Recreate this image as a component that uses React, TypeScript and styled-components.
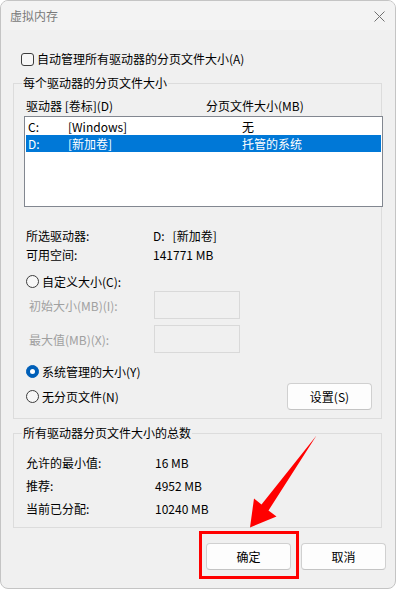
import * as React from 'react'
import styled, { createGlobalStyle } from 'styled-components'

const GlobalStyle = createGlobalStyle`
  html, body {
    margin: 0;
    padding: 0;
    background: #ffffff;
  }
  body {
    font-family: "Noto Sans CJK SC", "Noto Sans", sans-serif;
    font-size: 12px;
    color: #000;
  }
`

const drives = [
  { letter: 'C:', label: '[Windows]', size: '无', selected: false },
  { letter: 'D:', label: '[新加卷]', size: '托管的系统', selected: true },
]

const totals = [
  { label: '允许的最小值:', value: '16 MB' },
  { label: '推荐:', value: '4952 MB' },
  { label: '当前已分配:', value: '10240 MB' },
]

export default () => {
  return (
    <>
      <GlobalStyle />
      <Window>
        <TitleBar>
          <Title>{'虚拟内存'}</Title>
          <CloseButton>
            <svg width="11" height="11" viewBox="0 0 11 11">
              <path d="M0.5 0.5 L10.5 10.5 M10.5 0.5 L0.5 10.5" stroke="#707070" strokeWidth="1" fill="none" />
            </svg>
          </CloseButton>
        </TitleBar>

        <Body>
          <CheckRow>
            <CheckBox />
            <span>{'自动管理所有驱动器的分页文件大小(A)'}</span>
          </CheckRow>

          <Group $top={16} $bottom={8}>
            <Legend>{'每个驱动器的分页文件大小'}</Legend>
            <ListHeader>
              <HeaderCell $w={180}>{'驱动器 [卷标](D)'}</HeaderCell>
              <HeaderCell>{'分页文件大小(MB)'}</HeaderCell>
            </ListHeader>
            <DriveList>
              {drives.map((d) => (
                <DriveRow key={d.letter} $selected={d.selected}>
                  <Cell $w={40}>{d.letter}</Cell>
                  <Cell $w={174}>{d.label}</Cell>
                  <Cell>{d.size}</Cell>
                </DriveRow>
              ))}
            </DriveList>

            <InfoBlock>
              <InfoRow>
                <InfoLabel>{'所选驱动器:'}</InfoLabel>
                <span>{'D:'}</span>
                <DriveName>{'[新加卷]'}</DriveName>
              </InfoRow>
              <InfoRow>
                <InfoLabel>{'可用空间:'}</InfoLabel>
                <span>{'141771 MB'}</span>
              </InfoRow>
            </InfoBlock>

            <RadioRow $top={8}>
              <Radio $checked={false} />
              <span>{'自定义大小(C):'}</span>
            </RadioRow>
            <FieldRow $top={0}>
              <FieldLabel>{'初始大小(MB)(I):'}</FieldLabel>
              <SizeInput />
            </FieldRow>
            <FieldRow $top={6}>
              <FieldLabel>{'最大值(MB)(X):'}</FieldLabel>
              <SizeInput />
            </FieldRow>
            <RadioRow $top={9}>
              <Radio $checked={true} />
              <span>{'系统管理的大小(Y)'}</span>
            </RadioRow>
            <LastRow>
              <RadioLabel>
                <Radio $checked={false} />
                <span>{'无分页文件(N)'}</span>
              </RadioLabel>
              <Button $w={85}>{'设置(S)'}</Button>
            </LastRow>
          </Group>

          <Group $top={14} $bottom={7}>
            <Legend>{'所有驱动器分页文件大小的总数'}</Legend>
            <TotalsBlock>
              {totals.map((t) => (
                <TotalRow key={t.label}>
                  <TotalLabel>{t.label}</TotalLabel>
                  <span>{t.value}</span>
                </TotalRow>
              ))}
            </TotalsBlock>
          </Group>
        </Body>

        <Footer>
          <Highlight>
            <Button $w={85}>{'确定'}</Button>
          </Highlight>
          <Button $w={85}>{'取消'}</Button>
        </Footer>

        <Arrow width="396" height="589" viewBox="0 0 396 589">
          <polygon
            points="316.5,435.5 268.5,510.5 276.5,516.5 250,527.5 254,498.5 261.5,504.5"
            fill="#ff0000"
          />
        </Arrow>
      </Window>
    </>
  )
}

const Window = styled.div`
  position: relative;
  width: 396px;
  height: 589px;
  box-sizing: border-box;
  border: 1px solid #c4c4c4;
  border-radius: 8px;
  background: #f0f0f0;
  overflow: hidden;
  display: flex;
  flex-direction: column;
`

const TitleBar = styled.div`
  height: 29px;
  flex-shrink: 0;
  display: flex;
  align-items: center;
  justify-content: space-between;
  padding: 0 10px 0 9px;
  background: #f3f3f3;
`

const Title = styled.span`
  color: #7a7a7a;
  line-height: 16px;
`

const CloseButton = styled.span`
  display: flex;
  align-items: center;
  justify-content: center;
  width: 11px;
  height: 11px;
  margin-top: 1px;
`

const Body = styled.div`
  display: flex;
  flex-direction: column;
  padding: 0 13px 0 12px;
`

const CheckRow = styled.div`
  display: flex;
  align-items: center;
  gap: 3px;
  margin: 21px 0 0 8px;
  line-height: 16px;
`

const CheckBox = styled.span`
  width: 11px;
  height: 11px;
  border: 1px solid #3c3c3c;
  border-radius: 3px;
  background: #f7f7f7;
`

const Group = styled.div<{ $top: number; $bottom: number }>`
  display: flex;
  flex-direction: column;
  margin-top: ${(p) => p.$top}px;
  padding: 0 8px ${(p) => p.$bottom}px 12px;
  border: 1px solid #dcdcdc;
`

const Legend = styled.div`
  align-self: flex-start;
  margin: -9px 0 0 -4px;
  padding: 0 1px;
  line-height: 16px;
  background: #f0f0f0;
`

const ListHeader = styled.div`
  display: flex;
  margin-top: 7px;
  line-height: 16px;
`

const HeaderCell = styled.span<{ $w?: number }>`
  width: ${(p) => (p.$w ? `${p.$w}px` : 'auto')};
  flex-shrink: 0;
`

const DriveList = styled.div`
  height: 87px;
  margin: 2px -10px 0 -2px;
  padding: 1px;
  border: 1px solid #828790;
  background: #ffffff;
`

const DriveRow = styled.div<{ $selected: boolean }>`
  display: flex;
  height: 17px;
  align-items: center;
  padding-left: 2px;
  background: ${(p) => (p.$selected ? '#0078d7' : 'transparent')};
  color: ${(p) => (p.$selected ? '#ffffff' : '#000000')};
`

const Cell = styled.span<{ $w?: number }>`
  width: ${(p) => (p.$w ? `${p.$w}px` : 'auto')};
  flex-shrink: 0;
  line-height: 16px;
`

const InfoBlock = styled.div`
  display: flex;
  flex-direction: column;
  margin-top: 19px;
`

const InfoRow = styled.div`
  display: flex;
  align-items: center;
  height: 19px;
`

const InfoLabel = styled.span`
  width: 127px;
  flex-shrink: 0;
`

const DriveName = styled.span`
  margin-left: 8px;
`

const RadioRow = styled.div<{ $top: number }>`
  display: flex;
  align-items: center;
  gap: 3px;
  height: 19px;
  margin-top: ${(p) => p.$top}px;
`

const RadioLabel = styled.div`
  display: flex;
  align-items: center;
  gap: 3px;
`

const Radio = styled.span<{ $checked: boolean }>`
  position: relative;
  width: 13px;
  height: 13px;
  box-sizing: border-box;
  border-radius: 50%;
  border: 1px solid ${(p) => (p.$checked ? '#005fb8' : '#3c3c3c')};
  background: ${(p) => (p.$checked ? '#005fb8' : '#f7f7f7')};
  display: flex;
  align-items: center;
  justify-content: center;

  &::after {
    content: '';
    display: ${(p) => (p.$checked ? 'block' : 'none')};
    width: 5px;
    height: 5px;
    border-radius: 50%;
    background: #ffffff;
  }
`

const FieldRow = styled.div<{ $top: number }>`
  display: flex;
  align-items: center;
  height: 28px;
  margin-top: ${(p) => p.$top}px;
`

const FieldLabel = styled.span`
  width: 125px;
  padding-left: 3px;
  flex-shrink: 0;
  color: #a0a0a0;
`

const SizeInput = styled.div`
  width: 86px;
  height: 28px;
  box-sizing: border-box;
  border: 1px solid #d9d9d9;
  background: #f0f0f0;
`

const LastRow = styled.div`
  display: flex;
  align-items: center;
  justify-content: space-between;
  margin-top: 2px;
  padding-right: 1px;
`

const Button = styled.div<{ $w: number }>`
  width: ${(p) => p.$w}px;
  height: 27px;
  box-sizing: border-box;
  display: flex;
  align-items: center;
  justify-content: center;
  border: 1px solid #d0d0d0;
  border-bottom-color: #c4c4c4;
  border-radius: 4px;
  background: #fdfdfd;
  line-height: 16px;
`

const TotalsBlock = styled.div`
  display: flex;
  flex-direction: column;
  margin-top: 10px;
`

const TotalRow = styled.div`
  display: flex;
  align-items: center;
  height: 23px;
`

const TotalLabel = styled.span`
  width: 129px;
  flex-shrink: 0;
`

const Footer = styled.div`
  display: flex;
  justify-content: flex-end;
  gap: 10px;
  margin-top: 15px;
  padding-right: 9px;
`

const Highlight = styled.div`
  position: relative;

  &::after {
    content: '';
    position: absolute;
    top: -12px;
    left: -7px;
    right: -8px;
    bottom: -9px;
    border: 3px solid #ff0000;
    pointer-events: none;
  }
`

const Arrow = styled.svg`
  position: absolute;
  top: -1px;
  left: -1px;
  pointer-events: none;
`
